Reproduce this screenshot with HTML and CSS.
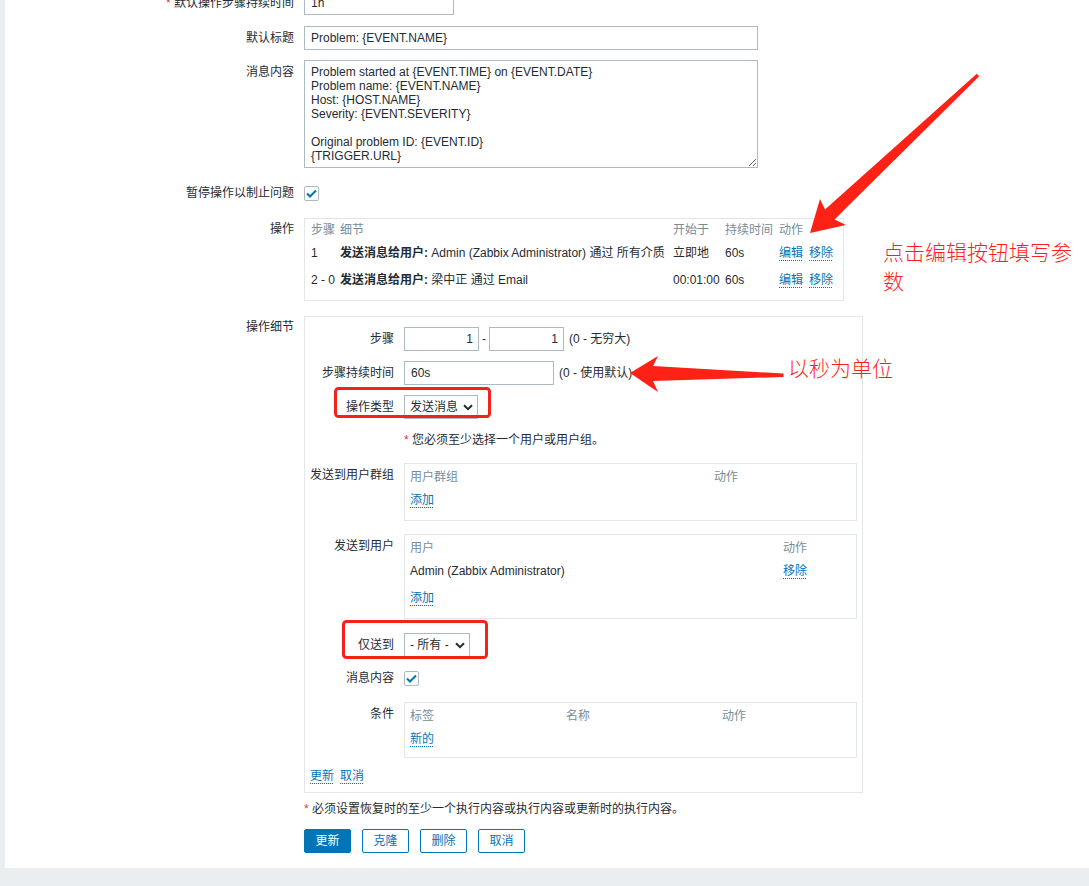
FILE: index.html
```html
<!DOCTYPE html>
<html lang="zh-CN">
<head>
<meta charset="utf-8">
<title>操作</title>
<link rel="stylesheet" href="styles.css">
</head>
<body>
<div class="page">
  <div class="row row-first">
    <div class="lbl"><span class="req">*</span> 默认操作步骤持续时间</div>
    <div class="ctl"><input class="inp w150" value="1h" readonly></div>
  </div>
  <div class="row row-title">
    <div class="lbl">默认标题</div>
    <div class="ctl"><input class="inp w454" value="Problem: {EVENT.NAME}" readonly></div>
  </div>
  <div class="row row-msg">
    <div class="lbl">消息内容</div>
    <div class="ctl"><textarea class="ta" readonly>Problem started at {EVENT.TIME} on {EVENT.DATE}
Problem name: {EVENT.NAME}
Host: {HOST.NAME}
Severity: {EVENT.SEVERITY}

Original problem ID: {EVENT.ID}
{TRIGGER.URL}</textarea></div>
  </div>
  <div class="row row-pause">
    <div class="lbl">暂停操作以制止问题</div>
    <div class="ctl"><span class="chk"><svg width="11" height="9" viewBox="0 0 11 9"><path d="M1 4.5 L4 7.5 L10 1.5" fill="none" stroke="#0275b8" stroke-width="2"/></svg></span></div>
  </div>
  <div class="row row-ops">
    <div class="lbl lbl-ops">操作</div>
    <div class="opbox">
      <table class="optable">
        <colgroup><col class="c-step"><col class="c-detail"><col class="c-start"><col class="c-dur"><col class="c-act"></colgroup>
        <thead>
          <tr class="tr-head"><th>步骤</th><th>细节</th><th>开始于</th><th>持续时间</th><th>动作</th></tr>
        </thead>
        <tbody>
          <tr class="tr-one"><td>1</td><td><b>发送消息给用户:</b> Admin (Zabbix Administrator) 通过 所有介质</td><td>立即地</td><td>60s</td><td><span class="acts"><a class="lnk">编辑</a><a class="lnk">移除</a></span></td></tr>
          <tr class="tr-two"><td>2 - 0</td><td><b>发送消息给用户:</b> 梁中正 通过 Email</td><td>00:01:00</td><td>60s</td><td><span class="acts"><a class="lnk">编辑</a><a class="lnk">移除</a></span></td></tr>
        </tbody>
      </table>
    </div>
  </div>
  <div class="row row-details">
    <div class="lbl lbl-details">操作细节</div>
    <div class="details">
      <div class="drow">
        <div class="dlbl">步骤</div>
        <div class="dctl">
          <input class="inp num" value="1" readonly><span class="dash">-</span><input class="inp num" value="1" readonly><span class="hint">(0 - 无穷大)</span>
        </div>
      </div>
      <div class="drow d-gap10">
        <div class="dlbl">步骤持续时间</div>
        <div class="dctl"><input class="inp w150" value="60s" readonly><span class="hint">(0 - 使用默认)</span></div>
      </div>
      <div class="drow d-gap10">
        <div class="dlbl">操作类型</div>
        <div class="dctl"><span class="sel sel-type">发送消息<svg class="chev" width="10" height="7" viewBox="0 0 10 7"><path d="M1 1.2 L5 5.2 L9 1.2" fill="none" stroke="#1f2c33" stroke-width="2"/></svg></span></div>
      </div>
      <div class="drow d-warn">
        <div class="dlbl"></div>
        <div class="dctl"><span class="req">*</span>&nbsp;您必须至少选择一个用户或用户组。</div>
      </div>
      <div class="drow d-ug">
        <div class="dlbl dlbl-box">发送到用户群组</div>
        <div class="sbox">
          <div class="shead cols-ug"><span>用户群组</span><span>动作</span></div>
          <div class="sadd"><a class="lnk">添加</a></div>
        </div>
      </div>
      <div class="drow d-users">
        <div class="dlbl dlbl-box">发送到用户</div>
        <div class="sbox">
          <div class="shead cols-users"><span>用户</span><span>动作</span></div>
          <div class="srow cols-users"><span>Admin (Zabbix Administrator)</span><span><a class="lnk">移除</a></span></div>
          <div class="sadd sadd-after"><a class="lnk">添加</a></div>
        </div>
      </div>
      <div class="drow d-only">
        <div class="dlbl">仅送到</div>
        <div class="dctl"><span class="sel sel-only">- 所有 -<svg class="chev" width="10" height="7" viewBox="0 0 10 7"><path d="M1 1.2 L5 5.2 L9 1.2" fill="none" stroke="#1f2c33" stroke-width="2"/></svg></span></div>
      </div>
      <div class="drow d-content">
        <div class="dlbl">消息内容</div>
        <div class="dctl"><span class="chk"><svg width="11" height="9" viewBox="0 0 11 9"><path d="M1 4.5 L4 7.5 L10 1.5" fill="none" stroke="#0275b8" stroke-width="2"/></svg></span></div>
      </div>
      <div class="drow d-cond">
        <div class="dlbl dlbl-box">条件</div>
        <div class="sbox sbox-cond">
          <div class="shead cols-cond"><span>标签</span><span>名称</span><span>动作</span></div>
          <div class="sadd"><a class="lnk">新的</a></div>
        </div>
      </div>
      <div class="dlinks"><a class="lnk">更新</a><a class="lnk">取消</a></div>
    </div>
  </div>
  <div class="row row-note">
    <div class="lbl"></div>
    <div class="ctl"><span class="req">*</span>&nbsp;必须设置恢复时的至少一个执行内容或执行内容或更新时的执行内容。</div>
  </div>
  <div class="row row-btns">
    <div class="lbl"></div>
    <div class="ctl btns">
      <button class="btn btn-primary">更新</button>
      <button class="btn">克隆</button>
      <button class="btn">删除</button>
      <button class="btn">取消</button>
    </div>
  </div>
</div>

<svg class="anno" width="1089" height="886" viewBox="0 0 1089 886">
  <polygon fill="#fe2216" points="810,233 846,225 834.5,219.5 979.2,76.2 976.8,73.8 825,209.5 820,199"/>
  <polygon fill="#fe2216" points="630,373 658,392 653,381 783.5,377 783.5,373.5 653,366 658,356"/>
  <rect x="335.5" y="388.5" width="154" height="28" rx="3" fill="none" stroke="#f5221a" stroke-width="3"/>
  <rect x="343.5" y="621.5" width="143" height="36" rx="3" fill="none" stroke="#f5221a" stroke-width="3"/>
</svg>
<div class="note note-edit">点击编辑按钮填写参数</div>
<div class="note note-sec">以秒为单位</div>
</body>
</html>
```

FILE: styles.css
```css
* { box-sizing: border-box; }
html, body { margin: 0; padding: 0; }
body {
  width: 1089px;
  height: 886px;
  overflow: hidden;
  position: relative;
  background: #ebeef0;
  font-family: "Liberation Sans", Arial, "Noto Sans CJK SC", sans-serif;
  font-size: 12px;
  line-height: 16px;
  color: #1f2c33;
}
.page {
  margin-left: 5px;
  background: #fff;
  padding-bottom: 15px;
}
.row { display: flex; gap: 10px; }
.lbl {
  flex: none;
  width: 289px;
  text-align: right;
  line-height: 24px;
  white-space: nowrap;
}
.ctl { display: flex; align-items: center; min-height: 24px; }
.req { color: #e33734; }

.row-first { margin-top: -9px; }
.row-title { margin-top: 11px; }
.row-msg { margin-top: 10px; }
.row-pause { margin-top: 13px; }
.row-ops { margin-top: 13px; }
.row-details { margin-top: 15px; }
.row-note { margin-top: 4px; }
.row-btns { margin-top: 8px; }
.lbl-ops { line-height: 20px; padding-top: 1px; }
.lbl-details { line-height: 22px; }

.inp {
  display: block;
  height: 24px;
  border: 1px solid #acbbc2;
  padding: 0 6px;
  font: inherit;
  color: #1f2c33;
  background: #fff;
  outline: none;
  margin: 0;
}
.w150 { width: 150px; }
.w454 { width: 454px; }
.num { width: 75px; text-align: right; padding-right: 5px; }
.dash { padding: 0 3px; }
.hint { margin-left: 5px; white-space: nowrap; }
.ta {
  display: block;
  width: 454px;
  height: 108px;
  border: 1px solid #acbbc2;
  padding: 4px 6px;
  font: inherit;
  line-height: 14px;
  color: #1f2c33;
  resize: both;
  overflow: hidden;
  outline: none;
  margin: 0;
}
.chk {
  width: 15px;
  height: 15px;
  border: 1px solid #acbbc2;
  border-radius: 2px;
  background: #fff;
  display: flex;
  align-items: center;
  justify-content: center;
}

.lnk {
  color: #0275b8;
  text-decoration: underline dotted;
  text-decoration-thickness: 1px;
  text-underline-offset: 3px;
  cursor: pointer;
}

/* operations table */
.opbox {
  width: 540px;
  border: 1px solid #e3e7ea;
  padding: 1px 6px 6px;
}
.optable { border-collapse: collapse; table-layout: fixed; width: 526px; }
.optable th, .optable td {
  padding: 0;
  text-align: left;
  white-space: nowrap;
  vertical-align: middle;
}
.optable th { font-weight: normal; color: #768d99; }
.c-step { width: 29px; }
.c-detail { width: 333px; }
.c-start { width: 52px; }
.c-dur { width: 54px; }
.tr-head { height: 20px; }
.tr-one { height: 26px; }
.tr-two { height: 28px; }
.acts { display: flex; gap: 6px; }

/* operation details */
.details {
  width: 559px;
  border: 1px solid #e3e7ea;
  padding: 10px 4px 4px 0;
}
.drow { display: flex; gap: 10px; }
.dlbl {
  flex: none;
  width: 89px;
  text-align: right;
  line-height: 24px;
  white-space: nowrap;
}
.dlbl-box { line-height: 22px; padding-top: 1px; }
.dctl { display: flex; align-items: center; height: 24px; white-space: nowrap; }
.d-gap10 { margin-top: 10px; }
.d-warn { margin-top: 9px; }
.d-ug { margin-top: 11px; }
.d-users { margin-top: 13px; }
.d-only { margin-top: 14px; }
.d-content { margin-top: 9px; }
.d-cond { margin-top: 12px; }

.sel {
  display: flex;
  align-items: center;
  justify-content: space-between;
  height: 24px;
  border: 1px solid #acbbc2;
  padding: 0 4px 0 5px;
  background: #fff;
}
.sel-type { width: 74px; }
.sel-only { width: 66px; }
.chev { display: block; }

.sbox {
  width: 453px;
  border: 1px solid #e3e7ea;
  padding: 2px 5px 8px;
}
.sbox-cond { padding-bottom: 6px; }
.shead { display: grid; height: 22px; align-items: center; color: #768d99; }
.srow { display: grid; height: 24px; align-items: center; }
.sadd { display: flex; align-items: center; height: 24px; }
.sadd-after { margin-top: 3px; }
.cols-ug { grid-template-columns: 304px 1fr; }
.cols-users { grid-template-columns: 373px 1fr; }
.cols-cond { grid-template-columns: 156px 156px 1fr; }

.dlinks {
  display: flex;
  gap: 6px;
  align-items: center;
  height: 24px;
  margin-top: 6px;
  padding-left: 5px;
}

/* buttons */
.btns { gap: 11px; }
.btn {
  width: 47px;
  height: 24px;
  border: 1px solid #0275b8;
  border-radius: 2px;
  background: #fff;
  color: #0275b8;
  font: inherit;
  padding: 0;
  margin: 0;
  display: flex;
  align-items: center;
  justify-content: center;
}
.btn-primary { background: #0275b8; color: #fff; }

/* annotations overlay */
.anno { position: absolute; left: 0; top: 0; pointer-events: none; }
.note {
  position: absolute;
  color: #ff1e1e;
  font-family: "Noto Sans CJK SC", sans-serif;
  font-weight: 300;
  font-size: 21px;
  line-height: 29px;
}
.note-edit { left: 883px; top: 237px; width: 200px; }
.note-sec { left: 788px; top: 353px; white-space: nowrap; }
```
